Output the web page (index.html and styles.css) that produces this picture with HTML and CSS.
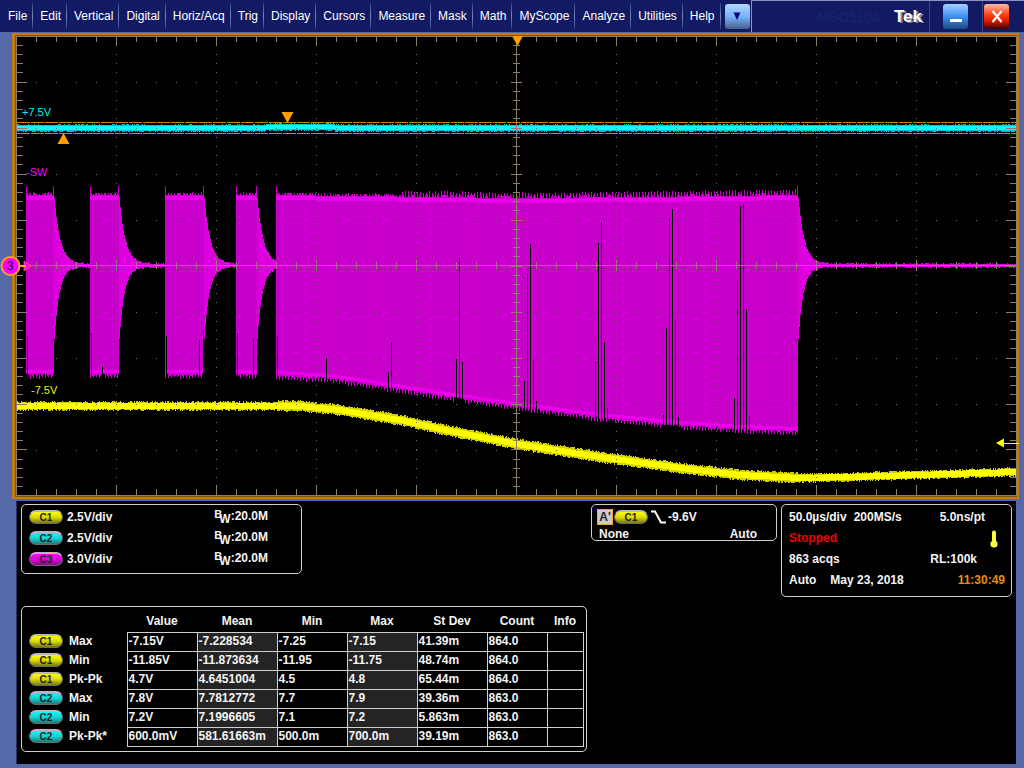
FILE: index.html
```html
<!DOCTYPE html>
<html lang="en">
<head>
<meta charset="utf-8">
<title>Tek Oscilloscope</title>
<link rel="stylesheet" href="styles.css">
</head>
<body>
<header class="topbar">
  <nav class="menu" aria-label="Main menu">
    <button>File</button><button>Edit</button><button>Vertical</button><button>Digital</button><button>Horiz/Acq</button><button>Trig</button><button>Display</button><button>Cursors</button><button>Measure</button><button>Mask</button><button>Math</button><button>MyScope</button><button>Analyze</button><button>Utilities</button><button>Help</button>
  </nav>
  <button class="key more" aria-label="More"><svg width="8" height="9" viewBox="0 0 8 9"><path d="M0.5 0.5h7L4 8z" fill="#06067c"/></svg></button>
  <div class="title">
    <span class="model">MSO5104</span>
    <span class="brand">Tek</span>
    <div class="cell"><button class="key min" aria-label="Minimize"><svg width="12" height="3" viewBox="0 0 12 3"><path d="M0 0h12v3H0z" fill="#fff"/></svg></button></div>
    <div class="cell last"><button class="key close" aria-label="Close"><svg width="12" height="13" viewBox="0 0 12 13"><path d="M1.500 1L10.500 12M10.500 1L1.500 12" stroke="#fff" stroke-width="2.200"/></svg></button></div>
  </div>
</header>
<main>
  <svg class="scope" id="scope" viewBox="0 32 1024 469" role="img" aria-label="Waveforms">
    <rect x="12" y="33" width="1007" height="466" fill="#c67a10"/>
    <rect x="15" y="35" width="1002" height="462" fill="#7f5212"/>
    <rect x="16" y="36" width="1001" height="460" fill="#8c8068"/>
    <rect x="17" y="37" width="999" height="458" fill="#000"/>
    <g id="traces" shape-rendering="crispEdges"></g>
    <g id="grid" shape-rendering="crispEdges"></g>
    <g fill="#ff9e00">
      <path d="M512 36h11l-5.500 10z"/>
      <path d="M281.500 112h12l-6 11z"/>
      <path d="M57.500 144h12l-6-11z"/>
    </g>
    <path d="M996 443l8-4.500v9z" fill="#ff0"/><path d="M1003 443.500h16" stroke="#ff0"/>
    <path d="M24 261l7 5-7 5z" fill="#f0f" stroke="#ff9e00" stroke-width=".6"/>
    <path d="M19 266h7" stroke="#ffa01e" stroke-width="2"/>
    <circle cx="10.500" cy="266" r="9" fill="#f0f" stroke="#ffa01e" stroke-width="2"/>
    <text class="mark" x="10" y="270" text-anchor="middle">3</text>
    <text class="label" x="22" y="116" fill="#00f0f0">+7.5V</text>
    <text class="label" x="26" y="176" fill="#f000f0">-SW</text>
    <text class="label" x="31" y="394" fill="#f0f000">-7.5V</text>
  </svg>
  <section class="panel">
    <div class="readouts">
      <div class="box channels">
        <div class="ch"><span class="pill c1">C1</span><span>2.5V/div</span><span class="bw"><span class="b">B</span><span class="w">W</span>:20.0M</span></div>
        <div class="ch"><span class="pill c2">C2</span><span>2.5V/div</span><span class="bw"><span class="b">B</span><span class="w">W</span>:20.0M</span></div>
        <div class="ch"><span class="pill c3">C3</span><span>3.0V/div</span><span class="bw"><span class="b">B</span><span class="w">W</span>:20.0M</span></div>
      </div>
      <div class="box trigger">
        <div class="trow"><span class="a">A'</span><span class="pill c1">C1</span><svg width="15" height="14" viewBox="0 0 15 14"><path d="M0 1.500h4L10 12.500h5" fill="none" stroke="#fff" stroke-width="2"/></svg><span>-9.6V</span></div>
        <div class="trow2"><span>None</span><span>Auto</span></div>
      </div>
      <div class="box timebase">
        <div class="tl"><span>50.0µs/div</span><span class="rate">200MS/s</span><span class="res">5.0ns/pt</span></div>
        <div class="tl"><span class="stopped">Stopped</span><svg class="thermo" width="8" height="18" viewBox="0 0 8 18"><path d="M4 2.500v11" stroke="#ffff3c" stroke-width="4" stroke-linecap="round"/><circle cx="4" cy="14" r="3.600" fill="#ffff3c"/></svg></div>
        <div class="tl"><span>863 acqs</span><span class="rl">RL:100k</span></div>
        <div class="tl"><span>Auto</span><span class="date">May 23, 2018</span><span class="clock">11:30:49</span></div>
      </div>
    </div>
    <div class="box measure">
      <table>
        <colgroup><col class="name"><col class="v"><col class="mean"><col class="v"><col class="v"><col class="v"><col class="count"><col class="info"></colgroup>
        <thead><tr><td></td><th scope="col">Value</th><th scope="col">Mean</th><th scope="col">Min</th><th scope="col">Max</th><th scope="col">St Dev</th><th scope="col">Count</th><th scope="col">Info</th></tr></thead>
        <tbody>
          <tr><th scope="row"><span class="pill c1">C1</span>Max</th><td>-7.15V</td><td>-7.228534</td><td>-7.25</td><td>-7.15</td><td>41.39m</td><td>864.0</td><td></td></tr>
          <tr><th scope="row"><span class="pill c1">C1</span>Min</th><td>-11.85V</td><td>-11.873634</td><td>-11.95</td><td>-11.75</td><td>48.74m</td><td>864.0</td><td></td></tr>
          <tr><th scope="row"><span class="pill c1">C1</span>Pk-Pk</th><td>4.7V</td><td>4.6451004</td><td>4.5</td><td>4.8</td><td>65.44m</td><td>864.0</td><td></td></tr>
          <tr><th scope="row"><span class="pill c2">C2</span>Max</th><td>7.8V</td><td>7.7812772</td><td>7.7</td><td>7.9</td><td>39.36m</td><td>863.0</td><td></td></tr>
          <tr><th scope="row"><span class="pill c2">C2</span>Min</th><td>7.2V</td><td>7.1996605</td><td>7.1</td><td>7.2</td><td>5.863m</td><td>863.0</td><td></td></tr>
          <tr><th scope="row"><span class="pill c2">C2</span>Pk-Pk*</th><td>600.0mV</td><td>581.61663m</td><td>500.0m</td><td>700.0m</td><td>39.19m</td><td>863.0</td><td></td></tr>
        </tbody>
      </table>
    </div>
  </section>
</main>
<script src="scope.js"></script>
</body>
</html>
```
FILE: styles.css
```css
* { box-sizing: border-box; }
body {
  margin: 0;
  min-height: 100vh;
  display: flex;
  flex-direction: column;
  background: #5568a8;
  color: #f4f4f4;
  font: bold 12px/16px "Liberation Sans", Arial, sans-serif;
}
button { font: inherit; color: inherit; border: 0; padding: 0; background: none; }
.topbar {
  display: flex;
  align-items: center;
  height: 32px;
  background: #111a62;
}
.menu { display: flex; padding-left: 1px; font-weight: normal; color: #fff; }
.menu button {
  height: 26px;
  padding: 0 5px 0 7px;
  border-right: 1px solid;
  border-image: linear-gradient(#2c3a7c, #7388ba, #2c3a7c) 1;
}
.key {
  display: flex;
  align-items: center;
  justify-content: center;
  width: 25px;
  height: 25px;
  border-radius: 3px;
}
.more { margin: 0 1px 0 4px; background: linear-gradient(#b0d8ff, #78b4f8 50%, #446088); }
.title {
  flex: 1;
  display: flex;
  align-items: center;
  justify-content: flex-end;
  height: 32px;
  border-top: 1px solid #8c92c0;
  border-left: 1px solid #8c92c0;
}
.model { font-weight: normal; font-size: 14px; color: #1b246a; margin-right: 14px; }
.brand { font-size: 17px; line-height: 20px; color: #fff; text-shadow: 2px 1px 0 #8a8a8a; margin-right: 7px; }
.cell { height: 31px; width: 53px; display: flex; align-items: center; padding-left: 13px; border-left: 1px solid #3d4680; }
.cell.last { width: 42px; padding-left: 1px; }
.min { background: linear-gradient(#a4d0ff, #3e90f4 50%, #1c4a84); align-items: flex-end; padding-bottom: 7px; }
.close { background: linear-gradient(#ffb8a8, #ff3c10 45%, #e02000 65%, #400000); }
main { flex: 1; display: flex; flex-direction: column; }
.scope { display: block; width: 100%; height: auto; }
.label { font: 11px "Liberation Sans", Arial, sans-serif; }
.mark { font: 12px "Liberation Sans", Arial, sans-serif; }
.panel {
  flex: 1;
  margin: 0 8px 4px 16px;
  padding: 3px 4px 12px;
  background: #000;
  border-left: 1px solid #2b3560;
}
.readouts { display: flex; align-items: flex-start; gap: 4px; margin-bottom: 9px; }
.box { border: 1px solid #d0d0d0; border-radius: 5px; }
.channels { width: 281px; margin-right: auto; padding: 1px 0 4px 7px; }
.ch { display: flex; align-items: center; height: 21px; }
.pill {
  flex: none;
  display: inline-block;
  width: 34px;
  height: 14px;
  margin-right: 4px;
  border: 1px solid #6c6c6c;
  border-top: 2px solid #b8b8b8;
  border-radius: 8px;
  color: #222;
  font-size: 10px;
  line-height: 12px;
  text-align: center;
}
.c1 { background: linear-gradient(#ffff00, #d8d800 50%, #787818); }
.c2 { background: linear-gradient(#00ffff, #18d0d0 50%, #207878); }
.c3 { background: linear-gradient(#ff00ff, #e000e0 50%, #801080); }
.bw { display: flex; margin-left: 102px; }
.b { font-size: 11px; line-height: 12px; }
.w { font-size: 12px; padding-top: 4px; line-height: 14px; margin-left: -3px; }
.trigger { width: 186px; padding: 3px 5px 0; height: 37px; }
.trow { display: flex; align-items: center; height: 18px; }
.a { width: 16px; height: 16px; line-height: 14px; border: 1px solid #ff9e28; background: #ccc; color: #222; text-align: center; }
.trigger .pill { margin: 0 3px 0 1px; }
.trow span:last-child { margin-left: 2px; }
.trow2 { display: flex; justify-content: space-between; padding: 0 14px 0 2px; line-height: 16px; }
.timebase { width: 231px; padding: 1px 6px 6px 7px; }
.tl { display: flex; align-items: center; height: 21px; }
.rate { margin-left: 7px; }
.res { margin-left: auto; padding-right: 20px; }
.stopped { color: #f00000; }
.thermo { margin: 3px 7px 0 auto; }
.rl { margin-left: auto; padding-right: 28px; }
.date { margin-left: 14px; }
.clock { margin-left: auto; color: #e88c10; }
.measure { width: 566px; padding: 6px 2px 4px 7px; }
table { border-collapse: collapse; table-layout: fixed; width: 554px; }
.name { width: 98px; }
.v { width: 70px; }
.mean { width: 80px; }
.count { width: 60px; }
.info { width: 36px; }
th, td { padding: 0 1px 2px; height: 19px; line-height: 16px; text-align: left; font-weight: bold; white-space: nowrap; }
tbody th { display: flex; align-items: center; padding: 0 0 2px; }
thead th { text-align: center; height: 19px; }
tbody td { border: 1px solid #d0d0d0; }
tbody td:nth-child(3), tbody td:nth-child(5) { background: #242424; }
tbody .pill { margin-right: 6px; }
```
FILE: scope.js
```js
const NS = "http://www.w3.org/2000/svg";
const traces = document.getElementById("traces");
const grid = document.getElementById("grid");
let seed = 7;
const rnd = () => (seed = (seed * 16807) % 2147483647) / 2147483647;

function add(parent, d, fill) {
  const p = document.createElementNS(NS, "path");
  p.setAttribute("d", d);
  p.setAttribute("fill", fill);
  parent.appendChild(p);
}
const bar = (x, y0, y1, w = 1) => `M${x} ${Math.round(y0)}h${w}V${Math.round(y1)}h${-w}z`;

function lerp(points, x) {
  for (let i = 1; i < points.length; i++) {
    if (x <= points[i][0]) {
      const [x0, y0] = points[i - 1], [x1, y1] = points[i];
      return y0 + (y1 - y0) * (x - x0) / (x1 - x0);
    }
  }
  return points[points.length - 1][1];
}

/* limit lines */
for (const y of [122, 133]) {
  let d = "";
  for (let x = 17; x < 1016; x += 14) d += `M${x} ${y}h${Math.min(13, 1016 - x)}v1H${x}z`;
  add(traces, d, "#d07e10");
}

/* C2: supply rail */
let noise = "", core = "";
for (let x = 17; x < 1016; x++) {
  const up = x > 265 && x < 335 ? 1 : 0;
  noise += bar(x, 125 - up - (rnd() < .3 ? 1 : 0), 131 - up + (rnd() < .5 ? 1 : 0));
  core += bar(x, 126 - up, 130 - up);
}
add(traces, noise, "#00c4cc");
add(traces, core, "#00ffff");

/* C3: switching node */
const bottom = [[276, 378], [330, 381], [390, 390], [440, 398], [516, 409], [600, 420], [670, 427], [740, 432], [798, 434]];
const top3 = [[276, 195], [516, 198], [640, 197], [798, 195]];
const bursts = [[26, 54], [90, 119], [165, 204], [236, 257], [276, 798]];
let body = "", hot = "", stripe = "", tail = "";
bursts.forEach(([a, b], i) => {
  const main = i === 4;
  for (let x = a; x < b; x++) {
    const t = main ? lerp(top3, x) : 195;
    const l = main ? lerp(bottom, x) : 377;
    let spike = rnd() < .3 ? 2 : 0;
    if (x % 3 === 0) spike = (main && x > 400 ? 4 : 1) + rnd() * 2;
    if (x === a || x === b - 1) spike = 9;
    const end = l - 3 + rnd() * 2 + (x % 3 === 0 ? 3 : 0);
    body += bar(x, t - spike, end);
    hot += bar(x, t + 1, t + 5) + bar(x, l - 7, l - 4);
    if (x % 3 === 0) stripe += bar(x, t + 6, l - 9);
  }
  const next = i < 4 ? bursts[i + 1][0] : 1016;
  for (let x = b; x < next; x++) {
    const k = x - b;
    tail += bar(x, 264 - 66 * Math.exp(-k / 6) - (rnd() < .35 ? 1 : 0), 267 + 72 * Math.exp(-k / 5) + (rnd() < .35 ? 1 : 0));
  }
});
add(traces, body, "#cc00cc");
add(traces, stripe, "#c400c8");
add(traces, hot, "#ec00ec");
add(traces, tail, "#dc00dc");

/* gaps between pulses */
const gaps = [
  [27, 336], [54, 340], [91, 333], [102, 366], [166, 336], [199, 340], [203, 330], [237, 333], [253, 338],
  [277, 336], [326, 358], [388, 372], [391, 342],
  [456, 359], [459, 257], [462, 362], [524, 381], [527, 273], [530, 244], [533, 360], [536, 401],
  [595, 361], [598, 243], [601, 222], [604, 342], [607, 408],
  [663, 415], [666, 328], [669, 218], [672, 209], [675, 320], [678, 417],
  [734, 398], [737, 280], [740, 206], [743, 204], [746, 309], [749, 416]
];
add(traces, gaps.map(([x, y]) => bar(x, y, (x < 276 ? 378 : lerp(bottom, x)) + 2)).join(""), "#000");

/* C1: negative rail */
const rail = [[17, 406], [300, 406], [340, 410], [400, 420], [440, 429], [516, 444], [600, 457], [680, 468], [740, 475], [800, 478], [850, 477], [1016, 472]];
noise = ""; core = "";
for (let x = 17; x < 1016; x++) {
  const y = lerp(rail, x);
  const busy = x > 276 && x < 798 ? 1 : 0;
  noise += bar(x, y - 3 - busy - rnd() * 2, y + 3 + busy + rnd() * 2);
  core += bar(x, y - 3, y + 3);
}
add(traces, noise, "#d0d000");
add(traces, core, "#ffff00");

/* graticule */
let g = "M17 265h999v1H17zM516 37h1v458h-1z", dots = "";
for (let i = 1; i < 50; i++) {
  const x = 16 + i * 20, major = i % 5 === 0, n = major ? 10 : 6;
  g += bar(x, 36, 36 + n) + bar(x, 495 - n, 495) + bar(x, major ? 260 : 262, major ? 271 : 269);
  for (let r = 1; r < 10; r++) dots += bar(x, 36 + r * 46, 37 + r * 46);
}
for (let i = 1; i < 50; i++) {
  const y = Math.round(35.5 + i * 9.2), n = i % 5 === 0 ? 10 : 6;
  g += `M17 ${y}h${n}v1h${-n}zM1016 ${y}h${-n}v1h${n}zM${516 - n / 2} ${y}h${n + 1}v1h${-n - 1}z`;
  for (let c = 1; c < 10; c++) dots += bar(16 + c * 100, y, y + 1);
}
add(grid, dots, "#6f6a58");
add(grid, g, "#8c8068");
```
